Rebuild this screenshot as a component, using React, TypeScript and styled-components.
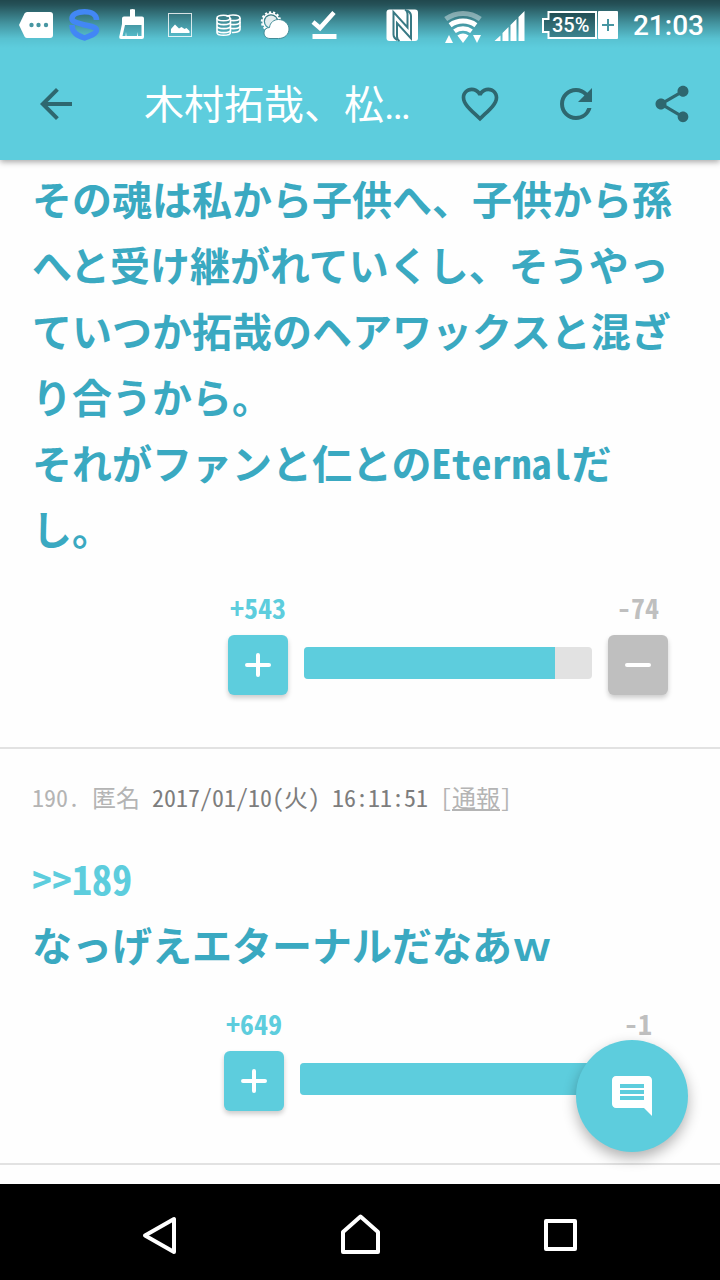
import React from "react";
import styled, { createGlobalStyle } from "styled-components";
import { MdArrowBack, MdComment, MdFavoriteBorder, MdRefresh, MdShare } from "react-icons/md";

const color = {
  primary: "#5dcddd",
  text: "#3aa9c1",
  icon: "#2e676f",
  grey: "#bfbfbf",
  track: "#e2e2e2",
  muted: "#b4b4b4",
  date: "#7d7d7d",
};

const GlobalStyle = createGlobalStyle`
  *, *::before, *::after { box-sizing: border-box; }
  body {
    margin: 0;
    background: #fefefe;
    font-family: "Noto Sans CJK JP", sans-serif;
    font-feature-settings: "hwid";
  }
  button {
    border: 0;
    padding: 0;
    background: none;
    font: inherit;
    cursor: pointer;
  }
`;

const Screen = styled.div`
  display: flex;
  flex-direction: column;
  min-height: 100vh;
`;

const Header = styled.header`
  position: sticky;
  top: 0;
  z-index: 2;
  background: ${color.primary};
  box-shadow: 0 2px 6px rgba(0, 0, 0, 0.35);
`;

const StatusBar = styled.div`
  display: flex;
  align-items: center;
  height: 48px;
  padding: 0 16px 0 12px;
  color: #fff;
  background: linear-gradient(rgba(0, 0, 0, 0.65), rgba(0, 0, 0, 0.6) 10%, rgba(0, 0, 0, 0.27) 50%, rgba(0, 0, 0, 0.06) 80%, transparent);
`;

const StatusGroup = styled.div`
  display: flex;
  align-items: center;
  & + & { margin-left: auto; }
`;

const StatusSvg = styled.svg`
  display: block;
  flex: none;
  height: 48px;
`;

const BatteryLabel = styled.text`
  font: 500 20px Roboto, sans-serif;
  fill: #fff;
`;

const Clock = styled.time`
  font: 500 28px/48px Roboto, sans-serif;
  padding-top: 4px;
`;

const AppBar = styled.div`
  display: flex;
  align-items: center;
  height: 112px;
  padding: 0 24px 0 32px;
`;

const IconButton = styled.button`
  display: flex;
  align-items: center;
  justify-content: center;
  flex: none;
  width: 48px;
  height: 48px;
  color: ${color.icon};
`;

const Title = styled.h1`
  flex: 1;
  margin: 0 0 0 64px;
  padding-top: 4px;
  overflow: hidden;
  white-space: nowrap;
  font: 400 40px/64px Roboto, "Noto Sans CJK JP", sans-serif;
  color: #fff;
`;

const Actions = styled.div`
  display: flex;
  gap: 48px;
`;

const Thread = styled.main`
  flex: 1;
  padding-top: 5px;
`;

const Post = styled.article`
  border-bottom: 2px solid ${color.track};
  padding: 0 32px 52px;
`;

const Meta = styled.div`
  padding: 30px 0;
  font-size: 24px;
  line-height: 36px;
  color: ${color.muted};
  white-space: pre-wrap;
`;

const PostDate = styled.time`
  color: ${color.date};
`;

const ReportLink = styled.a`
  color: inherit;
  text-decoration: underline;
`;

const Body = styled.p`
  margin: 0;
  font-size: 40px;
  font-weight: 700;
  line-height: 66px;
  color: ${color.text};
`;

const FullWidth = styled.span`
  font-feature-settings: normal;
`;

const ReplyLink = styled.a`
  color: ${color.primary};
  text-decoration: none;
`;

const Votes = styled.div`
  display: flex;
  align-items: flex-end;
  justify-content: flex-end;
  gap: 16px;
  padding: 26px 20px 0 0;
`;

const VoteColumn = styled.div<{ $tone: string }>`
  display: flex;
  flex-direction: column;
  align-items: center;
  gap: 8px;
  width: 60px;
  font-size: 28px;
  font-weight: 700;
  line-height: 40px;
  color: ${(p) => p.$tone};
`;

const VoteButton = styled.button<{ $tone: string }>`
  display: flex;
  align-items: center;
  justify-content: center;
  width: 60px;
  height: 60px;
  border-radius: 6px;
  background: ${(p) => p.$tone};
  box-shadow: 0 3px 5px rgba(0, 0, 0, 0.2);
`;

const Track = styled.div<{ $width: number }>`
  flex: 0 1 ${(p) => p.$width}px;
  height: 32px;
  margin-bottom: 16px;
  border-radius: 4px;
  overflow: hidden;
  background: ${color.track};
`;

const Fill = styled.div`
  height: 100%;
  background: ${color.primary};
`;

const Fab = styled.button`
  position: fixed;
  right: 32px;
  bottom: 128px;
  z-index: 1;
  display: flex;
  align-items: center;
  justify-content: center;
  width: 112px;
  height: 112px;
  border-radius: 50%;
  background: ${color.primary};
  color: #fff;
  box-shadow: 0 6px 14px rgba(0, 0, 0, 0.3);
`;

const NavBar = styled.nav`
  position: sticky;
  bottom: 0;
  z-index: 2;
  display: flex;
  justify-content: center;
  gap: 104px;
  height: 96px;
  background: #000;
`;

const NavButton = styled.button`
  width: 96px;
  height: 96px;
`;

const NavSvg = styled.svg`
  display: block;
  fill: none;
  stroke: #fff;
  stroke-width: 4;
  stroke-linejoin: round;
`;

function StatusIcons() {
  return (
    <StatusBar>
      <StatusGroup aria-hidden="true">
        <StatusSvg width="48" viewBox="0 0 48 48">
          <path fill="#fff" d="M15 12h23q3 0 3 3v20q0 3-3 3H15q-1.500 0-2.500-1.500L7 25l5.500-11.500Q13.500 12 15 12z" />
          <g fill="#4796a2">
            <circle cx="19.500" cy="25" r="2.200" />
            <circle cx="26.500" cy="25" r="2.200" />
            <circle cx="34" cy="25" r="2.200" />
          </g>
        </StatusSvg>
        <StatusSvg width="48" viewBox="0 0 48 48">
          <path
            fill="none"
            stroke="#4287f5"
            strokeWidth="5.500"
            strokeLinejoin="round"
            d="M36.500 20C36.500 15 32 11.800 24.500 11.800S12 14.500 12 18.500C12 22 16 22.500 23 24.500 31 26.500 36.500 27 36.500 30 36.500 33.500 31 35.500 24.500 38 17 35.500 12 32.500 12 25"
          />
        </StatusSvg>
        <StatusSvg width="48" viewBox="0 0 48 48">
          <path
            fill="#fff"
            fillRule="evenodd"
            d="M22 9.500q2.500-1 5 0v7h7q2 0 2 2V37q0 2-2 2H13q-2 0-1.800-2L14 24v-5.500q0-2 2-2h6zM17 25l-2.500 11h3l.5-4 .5 4H29l.5-4 .5 4h3.500V25z"
          />
        </StatusSvg>
        <StatusSvg width="48" viewBox="0 0 48 48">
          <rect x="12.500" y="13.500" width="23" height="23" fill="none" stroke="#fff" strokeOpacity=".8" />
          <path fill="#fff" d="M15 33v-4l4-4.500 4 4 2.500-1.500 3 2 2-1 3 3v2z" />
        </StatusSvg>
        <StatusSvg width="48" viewBox="0 0 48 48">
          <g fill="none" stroke="#fff" strokeWidth="1.600">
            <path d="M22.500 16.500C24 15.500 26 15 29 15c4 0 7 1 7 3v11.500c0 2-3 3.200-8 3" />
            <path d="M27 20.500c5 .5 9-.5 9-2.500M27 24.500c5 .5 9-.5 9-2.500M27 28.500c5 .5 9-.5 9-2.500" />
            <ellipse cx="19.500" cy="18" rx="6.500" ry="2.800" />
            <path d="M13 18v14.500c0 1.800 3 2.800 6.500 2.800s7-1 7-2.800V18M13 22c0 3.500 13.500 3.500 13.500 0M13 26c0 3.500 13.500 3.500 13.500 0M13 30c0 3.500 13.500 3.500 13.500 0" />
          </g>
        </StatusSvg>
        <StatusSvg width="48" viewBox="0 0 48 48">
          <circle cx="19" cy="21.500" r="9.200" fill="none" stroke="#fff" strokeWidth="2" strokeDasharray="2.200 1.900" />
          <circle cx="19" cy="21.500" r="8" fill="none" stroke="#fff" strokeWidth="1.500" />
          <circle cx="19" cy="21.500" r="6" fill="#fff" fillOpacity=".85" />
          <path
            fill="#fff"
            stroke="#438c97"
            strokeWidth="1"
            d="M18 38.500c-3.500 0-6-2.500-6-5.500s2-5.500 5.500-5.500c.5-5 4.500-8 9-8 6 0 10.500 4.500 10.500 9.500s-4 9.500-10.500 9.500z"
          />
        </StatusSvg>
        <StatusSvg width="48" viewBox="0 0 48 48">
          <path d="M13 22l7 6L34 12.500" fill="none" stroke="#fff" strokeWidth="4.500" />
          <path fill="#fff" d="M12.500 34h24v5h-24z" />
        </StatusSvg>
      </StatusGroup>
      <StatusGroup>
        <StatusSvg width="56" viewBox="0 0 56 48" aria-hidden="true">
          <rect x="7.500" y="9.500" width="31.500" height="31.500" rx="3" fill="#fff" />
          <g fill="none" stroke="#387984" strokeWidth="2">
            <path d="M18.500 40q-4-2-4-5.500V12L28.500 27.500V14q0-3-2.500-4.500" />
            <path d="M28 10.500q4 2 4 5.500v22.500L18 23v13.500q0 3 2.500 4.500" />
          </g>
        </StatusSvg>
        <StatusSvg width="56" viewBox="0 0 56 48" aria-hidden="true">
          <g fill="none" stroke="#fff" strokeWidth="5">
            <path strokeOpacity=".4" d="M10.700 19.100A29.500 29.500 0 0 1 45.300 19.100" />
            <path d="M15.100 25.200A22 22 0 0 1 40.900 25.200" />
            <path d="M19.500 31.300A14.500 14.500 0 0 1 36.500 31.300" strokeWidth="4.500" />
          </g>
          <path fill="#fff" d="M28 43l-5.600-7.500A9.500 9.500 0 0 1 33.600 35.500zM10 43l4-8 4 8zM38 35h8l-4 8z" />
        </StatusSvg>
        <StatusSvg width="48" viewBox="-1 0 48 48" aria-hidden="true">
          <path fill="#fff" d="M2.500 41l6-5.500V41zM10.500 41v-8l6-6v14zM18.500 41V25l6-6v22zM26.500 41V17l6-6v30z" />
        </StatusSvg>
        <StatusSvg width="94" viewBox="-1 0 94 48" aria-label="35%">
          <path fill="#000" fillOpacity=".3" stroke="#fff" strokeWidth="2" d="M8.500 12H56v26H8.500v-6H3V19h5.500z" />
          <rect x="58" y="11" width="20" height="28" fill="#fff" rx="1" />
          <path stroke="#4796a2" strokeWidth="2" d="M62 25h12M68 19v12" />
          <BatteryLabel x="12" y="32">35%</BatteryLabel>
        </StatusSvg>
        <Clock>21:03</Clock>
      </StatusGroup>
    </StatusBar>
  );
}

type VoteProps = { plus: number; minus: number; percent: number; trackWidth: number };

function VoteRow({ plus, minus, percent, trackWidth }: VoteProps) {
  return (
    <Votes>
      <VoteColumn $tone={color.primary}>
        <span>+{plus}</span>
        <VoteButton $tone={color.primary} aria-label="プラス">
          <svg width="28" height="28" stroke="#fff" strokeWidth="4" strokeLinecap="round">
            <path d="M3 14h22M14 4v20" />
          </svg>
        </VoteButton>
      </VoteColumn>
      <Track $width={trackWidth}>
        <Fill style={{ width: `${percent}%` }} />
      </Track>
      <VoteColumn $tone={color.grey}>
        <span>-{minus}</span>
        <VoteButton $tone={color.grey} aria-label="マイナス">
          <svg width="28" height="28" stroke="#fff" strokeWidth="4" strokeLinecap="round">
            <path d="M3 14h22" />
          </svg>
        </VoteButton>
      </VoteColumn>
    </Votes>
  );
}

export default function App() {
  return (
    <Screen lang="ja">
      <GlobalStyle />
      <Header>
        <StatusIcons />
        <AppBar>
          <IconButton aria-label="戻る"><MdArrowBack size={48} /></IconButton>
          <Title>木村拓哉、松…</Title>
          <Actions>
            <IconButton aria-label="お気に入り"><MdFavoriteBorder size={44} /></IconButton>
            <IconButton aria-label="更新"><MdRefresh size={48} /></IconButton>
            <IconButton aria-label="共有"><MdShare size={44} /></IconButton>
          </Actions>
        </AppBar>
      </Header>
      <Thread>
        <Post>
          <Body>
            その魂は私から子供へ、子供から孫へと受け継がれていくし、そうやっていつか拓哉のヘアワックスと混ざり合うから。
            <br />
            それがファンと仁とのEternalだし。
          </Body>
          <VoteRow plus={543} minus={74} percent={87} trackWidth={288} />
        </Post>
        <Post>
          <Meta>
            190. 匿名 <PostDate>2017/01/10(火) 16:11:51</PostDate> [<ReportLink href="#report">通報</ReportLink>]
          </Meta>
          <Body>
            <ReplyLink href="#189">&gt;&gt;189</ReplyLink>
            <br />
            なっげえエターナルだなあ<FullWidth>ｗ</FullWidth>
          </Body>
          <VoteRow plus={649} minus={1} percent={99} trackWidth={292} />
        </Post>
      </Thread>
      <Fab aria-label="コメントする"><MdComment size={48} /></Fab>
      <NavBar>
        <NavButton aria-label="戻る">
          <NavSvg width="96" height="96"><path d="M62 35v33L33 51.500z" /></NavSvg>
        </NavButton>
        <NavButton aria-label="ホーム">
          <NavSvg width="96" height="96"><path d="M31 68V48l17.500-15.500L66 48v20z" /></NavSvg>
        </NavButton>
        <NavButton aria-label="履歴">
          <NavSvg width="96" height="96"><path d="M34 37h29v28H34z" /></NavSvg>
        </NavButton>
      </NavBar>
    </Screen>
  );
}
